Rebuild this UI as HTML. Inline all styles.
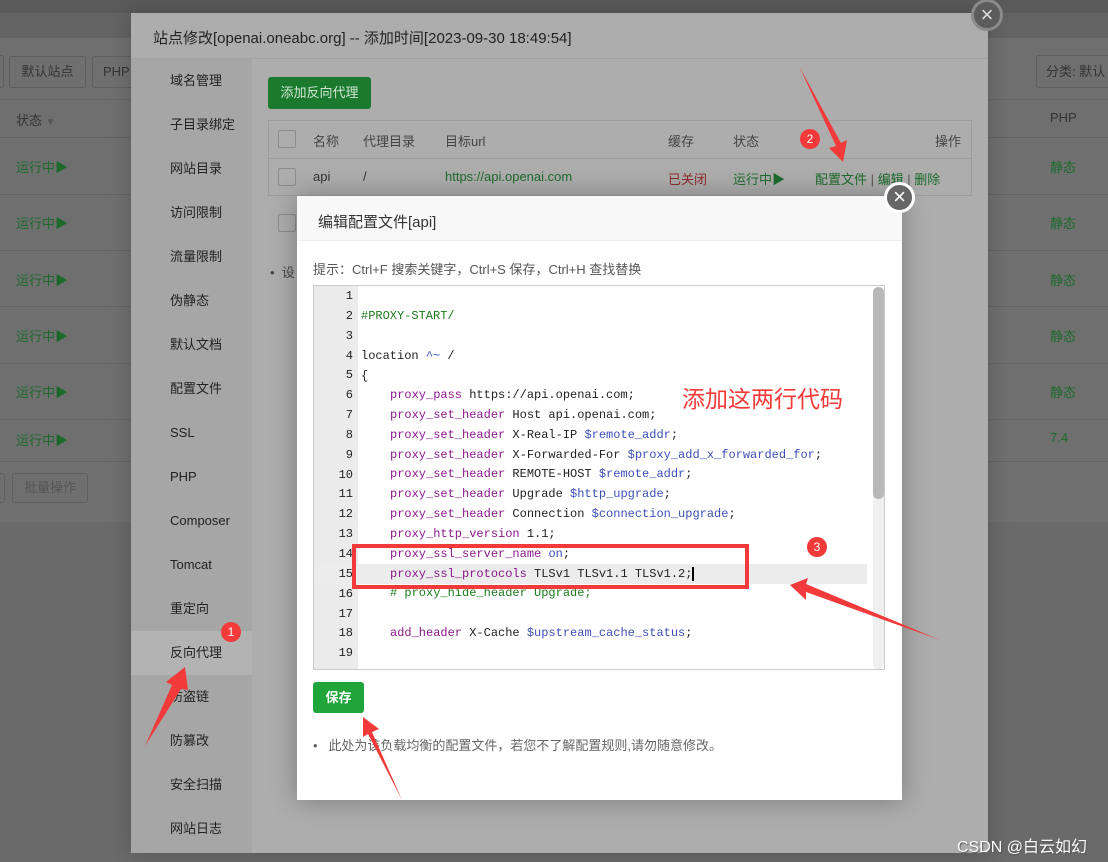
<!DOCTYPE html>
<html><head><meta charset="utf-8"><style>
*{margin:0;padding:0;box-sizing:border-box}
body{width:1108px;height:862px;overflow:hidden;position:relative;background:#6a6a6a;font-family:"Liberation Sans","Noto Sans CJK SC",sans-serif;font-size:13px}
.a{position:absolute;white-space:nowrap}
.g{color:#1d6b2c}
.mono{font-family:"Liberation Mono","DejaVu Sans Mono",monospace;font-size:12px}
.k{color:#8a1a8c}.v{color:#3d4fb8}.c{color:#1d7a1d}
.ln{position:absolute;left:313px;width:40px;text-align:right;color:#222}
</style></head><body>
<!-- background page -->
<div class="a" style="left:0;top:0;width:1108px;height:13px;background:#5a5a5a"></div>
<div class="a" style="left:0;top:13px;width:1108px;height:25px;background:#636363"></div>
<div class="a" style="left:0;top:38px;width:1108px;height:484px;background:#6f6f6f"></div>
<div class="a" style="left:-10px;top:55px;width:14px;height:33px;border:1px solid #5e5e5e;border-radius:3px"></div>
<div class="a" style="left:9px;top:56px;width:77px;height:32px;border:1px solid #5e5e5e;border-radius:3px;color:#333;text-align:center;line-height:30px">默认站点</div>
<div class="a" style="left:92px;top:56px;width:50px;height:32px;border:1px solid #5e5e5e;border-radius:3px;color:#333;padding-left:10px;line-height:30px">PHP</div>
<div class="a" style="left:1036px;top:55px;width:80px;height:33px;border:1px solid #5e5e5e;border-radius:3px;color:#333;padding-left:9px;line-height:31px">分类: 默认</div>
<div class="a" style="left:0;top:99px;width:1108px;height:1px;background:#646464"></div>
<div class="a" style="left:16px;top:110px;color:#333">状态 <span style="color:#555;font-size:10px">▼</span></div>
<div class="a" style="left:1050px;top:110px;color:#333">PHP</div>
<div class="a" style="left:0;top:137px;width:1108px;height:1px;background:#646464"></div>
<div class="a g" style="left:16px;top:157px">运行中▶</div><div class="a g" style="left:1050px;top:157px">静态</div>
<div class="a" style="left:0;top:194px;width:1108px;height:1px;background:#646464"></div>
<div class="a g" style="left:16px;top:213px">运行中▶</div><div class="a g" style="left:1050px;top:213px">静态</div>
<div class="a" style="left:0;top:250px;width:1108px;height:1px;background:#646464"></div>
<div class="a g" style="left:16px;top:270px">运行中▶</div><div class="a g" style="left:1050px;top:270px">静态</div>
<div class="a" style="left:0;top:306px;width:1108px;height:1px;background:#646464"></div>
<div class="a g" style="left:16px;top:326px">运行中▶</div><div class="a g" style="left:1050px;top:326px">静态</div>
<div class="a" style="left:0;top:363px;width:1108px;height:1px;background:#646464"></div>
<div class="a g" style="left:16px;top:382px">运行中▶</div><div class="a g" style="left:1050px;top:382px">静态</div>
<div class="a" style="left:0;top:419px;width:1108px;height:1px;background:#646464"></div>
<div class="a g" style="left:16px;top:430px">运行中▶</div><div class="a g" style="left:1050px;top:430px">7.4</div>
<div class="a" style="left:0;top:461px;width:1108px;height:1px;background:#646464"></div>
<div class="a" style="left:-10px;top:473px;width:15px;height:30px;border:1px solid #606060;border-radius:3px"></div>
<div class="a" style="left:12px;top:473px;width:76px;height:30px;border:1px solid #606060;border-radius:3px;color:#555;text-align:center;line-height:28px">批量操作</div>

<!-- outer modal -->
<div class="a" style="left:131px;top:13px;width:857px;height:840px;background:#adadad;box-shadow:0 0 20px rgba(0,0,0,.2)"></div>
<div class="a" style="left:131px;top:58px;width:857px;height:1px;background:#a2a2a2"></div>
<div class="a" style="left:153px;top:27px;font-size:15px;color:#222">站点修改[openai.oneabc.org] -- 添加时间[2023-09-30 18:49:54]</div>
<div class="a" style="left:131px;top:59px;width:121px;height:794px;background:#a6a6a6"></div>
<div class="a" style="left:131px;top:631px;width:121px;height:44px;background:#b3b3b3"></div>
<div class="a" style="left:170px;top:59px;color:#222;line-height:44px">域名管理<br>子目录绑定<br>网站目录<br>访问限制<br>流量限制<br>伪静态<br>默认文档<br>配置文件<br>SSL<br>PHP<br>Composer<br>Tomcat<br>重定向<br>反向代理<br>防盗链<br>防篡改<br>安全扫描<br>网站日志</div>
<div class="a" style="left:268px;top:77px;width:103px;height:32px;background:#1b7a2e;border-radius:3px;color:#cfe6d2;text-align:center;line-height:32px">添加反向代理</div>
<div class="a" style="left:268px;top:120px;width:704px;height:76px;border:1px solid #9c9c9c"></div>
<div class="a" style="left:269px;top:158px;width:702px;height:1px;background:#9c9c9c"></div>
<div class="a" style="left:278px;top:130px;width:18px;height:18px;border:1px solid #8c8c8c;border-radius:2px"></div>
<div class="a" style="left:278px;top:168px;width:18px;height:18px;border:1px solid #8c8c8c;border-radius:2px"></div>
<div class="a" style="left:278px;top:214px;width:18px;height:18px;border:1px solid #8c8c8c;border-radius:2px"></div>
<div class="a" style="left:313px;top:131px;color:#444">名称</div>
<div class="a" style="left:363px;top:131px;color:#444">代理目录</div>
<div class="a" style="left:445px;top:131px;color:#444">目标url</div>
<div class="a" style="left:668px;top:131px;color:#444">缓存</div>
<div class="a" style="left:733px;top:131px;color:#444">状态</div>
<div class="a" style="left:935px;top:131px;color:#444">操作</div>
<div class="a" style="left:313px;top:169px;color:#333">api</div>
<div class="a" style="left:363px;top:169px;color:#333">/</div>
<div class="a g" style="left:445px;top:169px">https://api.openai.com</div>
<div class="a" style="left:668px;top:169px;color:#8e2b2b">已关闭</div>
<div class="a g" style="left:733px;top:169px">运行中▶</div>
<div class="a g" style="left:815px;top:169px">配置文件 <span style="color:#555">|</span> 编辑 <span style="color:#555">|</span> 删除</div>
<div class="a" style="left:270px;top:262px;color:#444">•&nbsp;&nbsp;设</div>

<!-- inner modal -->
<div class="a" style="left:297px;top:196px;width:605px;height:604px;background:#fff;box-shadow:0 0 25px rgba(0,0,0,.3)"></div>
<div class="a" style="left:297px;top:196px;width:605px;height:45px;background:#f8f8f8;border-bottom:1px solid #eee"></div>
<div class="a" style="left:318px;top:211px;font-size:15px;color:#333">编辑配置文件[api]</div>
<div class="a" style="left:313px;top:259px;color:#555">提示：Ctrl+F 搜索关键字，Ctrl+S 保存，Ctrl+H 查找替换</div>
<div class="a" style="left:313px;top:285px;width:572px;height:385px;border:1px solid #ccc;overflow:hidden;background:#fff">
 <div class="a" style="left:0;top:0;width:44px;height:385px;background:#ebebeb"></div>
 <div class="a" style="left:0;top:278px;width:553px;height:20px;background:#ececec"></div>
 <div class="a" style="left:559px;top:1px;width:11px;height:382px;background:#f0f0f0;border-radius:5px"></div>
 <div class="a" style="left:559px;top:1px;width:11px;height:212px;background:#b8b8b8;border-radius:5px"></div>
</div>
<div class="mono">
<div class="ln a" style="top:287px;line-height:19.85px">1<br>2<br>3<br>4<br>5<br>6<br>7<br>8<br>9<br>10<br>11<br>12<br>13<br>14<br>15<br>16<br>17<br>18<br>19</div>
<div class="a" style="left:361px;top:307px;line-height:19.8px;color:#222"><span class="c">#PROXY-START/</span></div>
<div class="a" style="left:361px;top:346px;color:#222;line-height:20px">location <span class="v">^~</span> /</div>
<div class="a" style="left:361px;top:366px;color:#222;line-height:20px">{</div>
<div class="a" style="left:390px;top:386px;line-height:19.85px;color:#222">
<span class="k">proxy_pass</span> https://api.openai.com;<br>
<span class="k">proxy_set_header</span> Host api.openai.com;<br>
<span class="k">proxy_set_header</span> X-Real-IP <span class="v">$remote_addr</span>;<br>
<span class="k">proxy_set_header</span> X-Forwarded-For <span class="v">$proxy_add_x_forwarded_for</span>;<br>
<span class="k">proxy_set_header</span> REMOTE-HOST <span class="v">$remote_addr</span>;<br>
<span class="k">proxy_set_header</span> Upgrade <span class="v">$http_upgrade</span>;<br>
<span class="k">proxy_set_header</span> Connection <span class="v">$connection_upgrade</span>;<br>
<span class="k">proxy_http_version</span> 1.1;<br>
<span class="k">proxy_ssl_server_name</span> <span class="v">on</span>;<br>
<span class="k">proxy_ssl_protocols</span> TLSv1 TLSv1.1 TLSv1.2;<span style="border-left:2px solid #000"></span><br>
<span class="c"># proxy_hide_header Upgrade;</span><br>
<br>
<span class="k">add_header</span> X-Cache <span class="v">$upstream_cache_status</span>;
</div>
</div>
<div class="a" style="left:313px;top:682px;width:51px;height:31px;background:#20a53a;border-radius:3px;color:#fff;font-weight:bold;text-align:center;line-height:31px">保存</div>
<div class="a" style="left:313px;top:735px;color:#666">•&nbsp;&nbsp;&nbsp;此处为该负载均衡的配置文件，若您不了解配置规则,请勿随意修改。</div>

<!-- close buttons -->
<div class="a" style="left:971px;top:-1px;width:32px;height:32px;border-radius:50%;background:#5c5c5c;border:3px solid #8a8a8a;color:#ddd;font-size:22px;text-align:center;line-height:25px">×</div>
<div class="a" style="left:884px;top:182px;width:31px;height:31px;border-radius:50%;background:#666;border:3px solid #fff;color:#fff;font-size:22px;text-align:center;line-height:24px">×</div>

<!-- annotations -->
<div class="a" style="left:352px;top:544px;width:397px;height:45px;border:4px solid #f23a3a"></div>
<div class="a" style="left:682px;top:380px;font-size:23px;color:#f23a3a;font-family:'Noto Sans CJK SC',sans-serif">添加这两行代码</div>
<div class="a" style="left:221px;top:622px;width:20px;height:20px;border-radius:50%;background:#f23a3a;color:#fff;font-size:12px;text-align:center;line-height:20px">1</div>
<div class="a" style="left:800px;top:129px;width:20px;height:20px;border-radius:50%;background:#f23a3a;color:#fff;font-size:12px;text-align:center;line-height:20px">2</div>
<div class="a" style="left:807px;top:537px;width:20px;height:20px;border-radius:50%;background:#f23a3a;color:#fff;font-size:12px;text-align:center;line-height:20px">3</div>
<svg class="a" style="left:0;top:0" width="1108" height="862">
<g fill="#f23a3a">
<polygon points="145,746 172,685 166,682 185,667 188,690 181,689"/>
<polygon points="799,66 836,146 829,148 843,162 847,140 841,143"/>
<polygon points="940,640 806,584 808,578 790,585 806,600 806,592"/>
<polygon points="402,800 372,732 379,729 363,717 363,737 368,734"/>
</g></svg>
<div class="a" style="left:957px;top:833px;font-size:16px;color:#fff;text-shadow:1px 1px 1px #555">CSDN @白云如幻</div>
</body></html>
